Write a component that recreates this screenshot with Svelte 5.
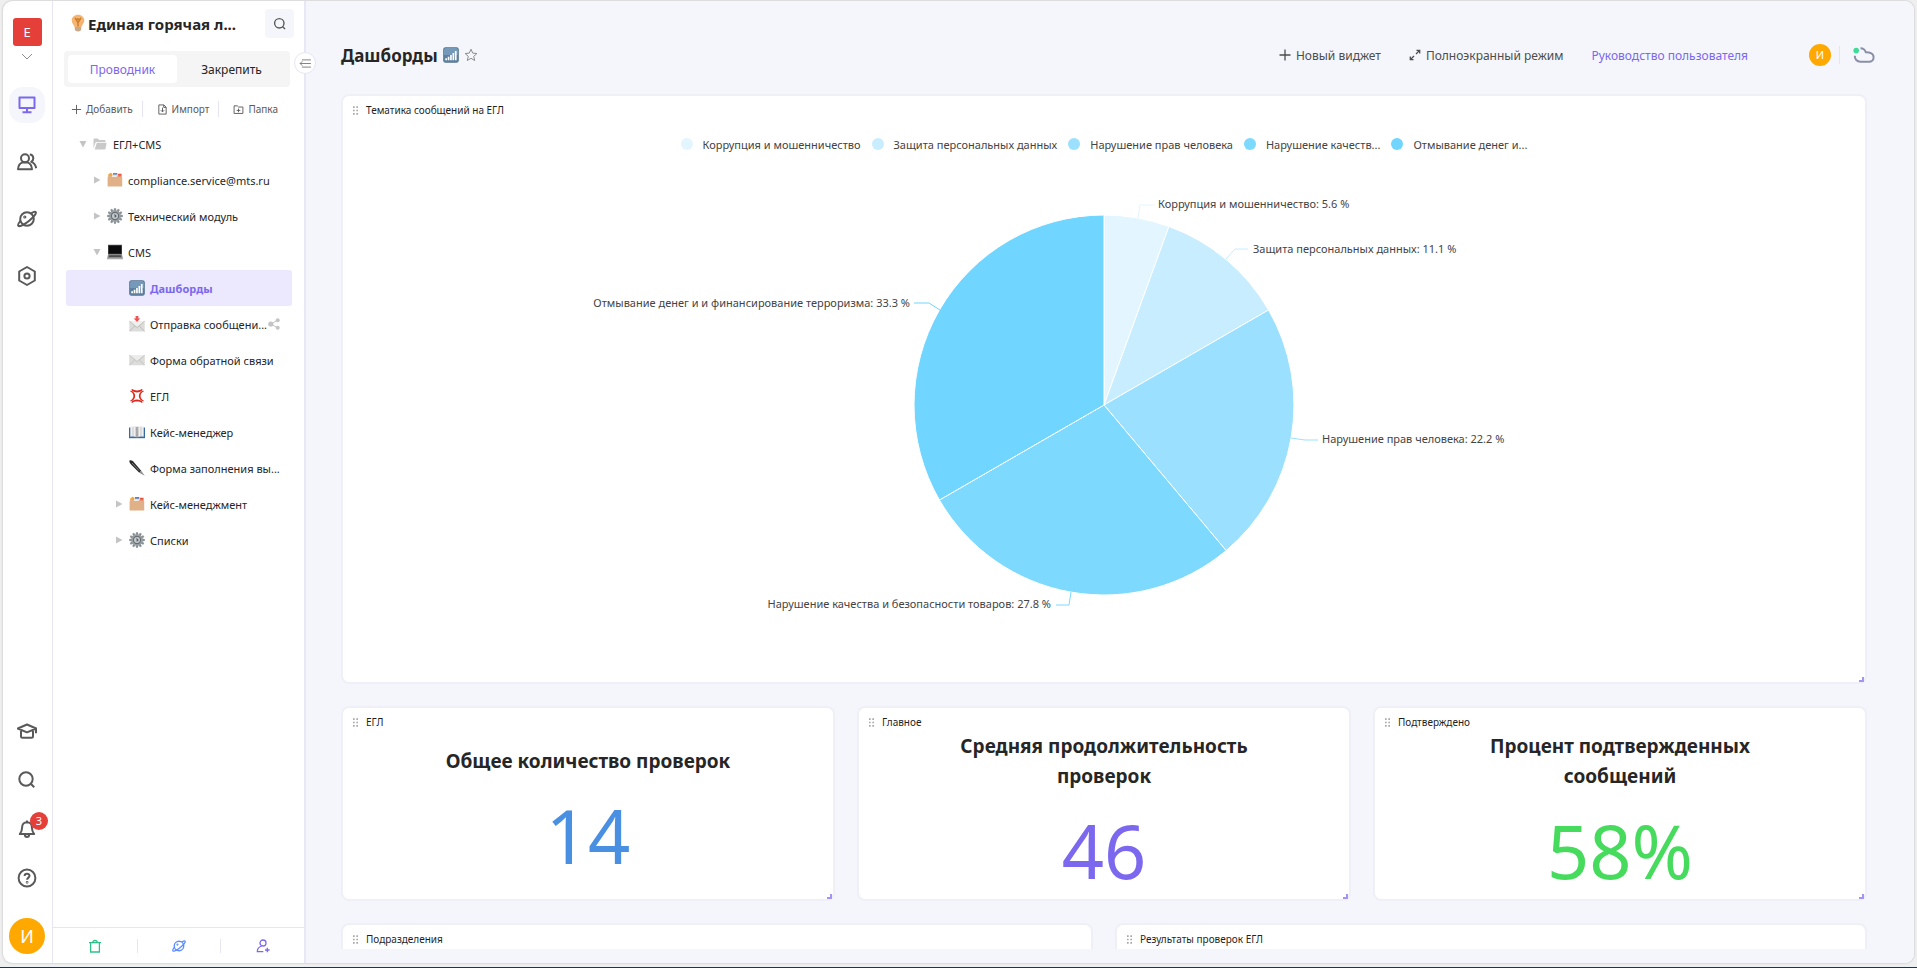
<script>
  const railTop = [
    { icon: 'monitor', label: 'Рабочий стол', active: true },
    { icon: 'people', label: 'Команда' },
    { icon: 'planet', label: 'Пространства' },
    { icon: 'hex', label: 'Настройки' }
  ];
  const railBottom = [
    { icon: 'cap', label: 'Обучение' },
    { icon: 'search', label: 'Поиск' },
    { icon: 'bell', label: 'Уведомления', badge: 3 },
    { icon: 'help', label: 'Помощь' }
  ];
  const tree = [
    { level: 0, caret: 'down', icon: 'folder', text: 'ЕГЛ+CMS' },
    { level: 1, caret: 'right', icon: 'dividers', text: 'compliance.service@mts.ru' },
    { level: 1, caret: 'right', icon: 'gear', text: 'Технический модуль' },
    { level: 1, caret: 'down', icon: 'laptop', text: 'CMS' },
    { level: 2, icon: 'bars', text: 'Дашборды', selected: true },
    { level: 2, icon: 'inbox', text: 'Отправка сообщени...', shared: true },
    { level: 2, icon: 'envelope', text: 'Форма обратной связи' },
    { level: 2, icon: 'anger', text: 'ЕГЛ' },
    { level: 2, icon: 'book', text: 'Кейс-менеджер' },
    { level: 2, icon: 'pen', text: 'Форма заполнения вы...' },
    { level: 2, caret: 'right', icon: 'dividers', text: 'Кейс-менеджмент' },
    { level: 2, caret: 'right', icon: 'gear', text: 'Списки' }
  ];
  const R = 190;
  const slices = [
    { name: 'Коррупция и мошенничество', legend: 'Коррупция и мошенничество', pct: '5.6 %', deg: 20, color: '#e3f6ff', line: '34,-187 36,-200 50,-200', x: 54, y: -197, anchor: 'start' },
    { name: 'Защита персональных данных', legend: 'Защита персональных данных', pct: '11.1 %', deg: 40, color: '#c8edff', line: '122,-146 131,-156 144,-156', x: 149, y: -152, anchor: 'start' },
    { name: 'Нарушение прав человека', legend: 'Нарушение прав человека', pct: '22.2 %', deg: 80, color: '#9be1ff', line: '187,33 201,35 214,35', x: 218, y: 38, anchor: 'start' },
    { name: 'Нарушение качества и безопасности товаров', legend: 'Нарушение качеств...', pct: '27.8 %', deg: 100, color: '#7ed9ff', line: '-33,187 -35,200 -48,200', x: -53, y: 203, anchor: 'end' },
    { name: 'Отмывание денег и и финансирование терроризма', legend: 'Отмывание денег и...', pct: '33.3 %', deg: 120, color: '#70d5ff', line: '-164,-95 -175,-102 -190,-102', x: -194, y: -98, anchor: 'end' }
  ];
  const pt = (deg) => {
    const a = ((deg - 90) * Math.PI) / 180;
    return `${(R * Math.cos(a)).toFixed(2)},${(R * Math.sin(a)).toFixed(2)}`;
  };
  let start = 0;
  const arcs = slices.map((s) => {
    const d = `M0,0 L${pt(start)} A${R},${R} 0 0 1 ${pt(start + s.deg)} Z`;
    start += s.deg;
    return { ...s, d };
  });
  const kpis = [
    { name: 'ЕГЛ', title: 'Общее количество проверок', value: '14', tone: 'blue' },
    { name: 'Главное', title: 'Средняя продолжительность проверок', value: '46', tone: 'violet' },
    { name: 'Подтверждено', title: 'Процент подтвержденных сообщений', value: '58%', tone: 'green' }
  ];
  const teeth = [0, 30, 60, 90, 120, 150, 180, 210, 240, 270, 300, 330];
</script>

{#snippet planetShape()}
  <circle cx="10" cy="10" r="6.800" />
  <path d="M3.600 11.500C1.600 14 .7 16 1.300 16.700c1.200 1.300 6.300-1.300 10.900-5s7.500-7.400 6.500-8.600c-.6-.7-2.400-.1-4.700 1.200" />
  <circle cx="7.800" cy="8" r=".6" />
{/snippet}

{#snippet icon(name)}
  {#if name === 'monitor'}
    <svg class="ico" viewBox="0 0 20 20"><path d="M2.500 2.500h15v10.500h-15zM10 13v4M5.500 17.300h9" /></svg>
  {:else if name === 'people'}
    <svg class="ico" viewBox="0 0 20 20"><circle cx="8" cy="6.300" r="4" /><path d="M1 17.300c.3-4 2.500-6.300 4.700-6.900h4.600c2.200.6 4.400 2.900 4.700 6.900zM12.800 2.500c4 .2 4.600 5.300 1.500 7.400 2.400.8 4.300 3.200 4.900 6.300" /></svg>
  {:else if name === 'planet'}
    <svg class="ico" viewBox="0 0 20 20">{@render planetShape()}</svg>
  {:else if name === 'hex'}
    <svg class="ico" viewBox="0 0 20 20"><path d="M10 1l7.800 4.500v9L10 19l-7.800-4.500v-9z" /><circle cx="10" cy="10" r="2.600" /></svg>
  {:else if name === 'cap'}
    <svg class="ico" viewBox="0 0 20 20"><path d="M.8 7.500L10 3.500l9.200 4L10 11.300zM4 9v6.200c0 .9.700 1.500 1.600 1.500h8.800c.9 0 1.600-.6 1.600-1.500V9M19 7.500v4.800" /></svg>
  {:else if name === 'search'}
    <svg class="ico" viewBox="0 0 20 20"><circle cx="9" cy="9" r="6.700" /><path d="M13.800 13.800l3.400 3.400" /></svg>
  {:else if name === 'bell'}
    <svg class="ico" viewBox="0 0 20 20"><path d="M10 1.500v1.700M10 3.200c-3.200 0-4.900 2.300-4.900 5.200 0 3.300-.7 4.600-2.300 6.700h14.400c-1.600-2.100-2.300-3.400-2.300-6.700 0-2.900-1.700-5.200-4.900-5.200zM7.800 15.400c.1 3.400 4.300 3.400 4.400 0" /></svg>
  {:else if name === 'help'}
    <svg class="ico" viewBox="0 0 20 20"><circle cx="10" cy="10" r="8.400" /><path d="M7.600 8c0-3.200 4.900-3 4.900-.2 0 1.800-2.400 1.900-2.400 4" /><circle cx="10.100" cy="14.300" r=".4" /></svg>
  {:else if name === 'folder'}
    <svg class="emo small" viewBox="0 0 14 14"><path fill="#c9c9c9" d="M.5 11.500V2.600c0-.6.400-1 1-1h3.300l1.300 1.500h5.400c.6 0 1 .4 1 1v.8H3.600c-.6 0-1 .3-1.200.8zM3.800 5.800h9c.5 0 .8.4.7.9l-1 5c-.1.500-.5.800-1 .8H1.700z" /></svg>
  {:else if name === 'dividers'}
    <svg class="emo" viewBox="0 0 16 16"><path fill="#f2a73c" d="M1.300 4V2.200L3.800.8 5.500 2v2z" /><path fill="#2f62b5" d="M6 1.200h4.300V4H6z" /><path fill="#d8e4f2" d="M5.600 2.600h5V4h-5z" /><path fill="#e8573f" d="M11 3.500V1.800h3.600v2z" /><path fill="#e0b087" d="M.6 5.200l.9-1.400h3l.8.900h4.200l1-1h3.600l1.100 1.200v9.700H.6z" /><path fill="#f0694c" d="M11.300 3h3v1.500h-3z" /></svg>
  {:else if name === 'gear'}
    <svg class="emo" viewBox="0 0 16 16">
      {#each teeth as t}<path fill="#8a9297" d="M7 .2h2l.4 3H6.600z" transform="rotate({t} 8 8)" />{/each}
      <circle cx="8" cy="8" r="5.700" fill="#9aa2a6" /><circle cx="8" cy="8" r="4.200" fill="#686e72" /><circle cx="8" cy="8" r="3" fill="#c4cbcf" /><path fill="#5a6064" d="M7.300 5.800l2.600 2.100-2.100 2.200-.2-1.500z" />
    </svg>
  {:else if name === 'laptop'}
    <svg class="emo" viewBox="0 0 16 16"><path fill="#585858" d="M1 .8h14v10H1z" /><path fill="#0b0b0d" d="M1.600 1.400h12.800v8.400H1.600z" /><path fill="#8d8d8d" d="M1 10.500h14l1 4.500H0z" /><path fill="#4c4c4c" d="M2.200 11.200h11.600l.4 1.700H1.800z" /><path fill="#bdbdbd" d="M0 14.400h16v1H0z" /></svg>
  {:else if name === 'bars'}
    <svg class="emo" viewBox="0 0 16 16"><rect x=".2" y=".2" width="15.600" height="15.600" rx="2.400" fill="#50718f" /><rect x="1" y="1" width="14" height="14" rx="1.800" fill="#7499b9" /><path fill="#5d809f" d="M1 8h14v5.500a1.500 1.500 0 0 1-1.500 1.500h-11A1.500 1.500 0 0 1 1 13.500z" /><path fill="#fff" d="M2.300 11.200h1.700v2H2.300zM4.700 9.800h1.700v3.400H4.700zM7.100 8h1.700v5.200H7.100zM9.500 6h1.700v7.200H9.500zM11.900 4h1.700v9.200h-1.700z" /></svg>
  {:else if name === 'inbox'}
    <svg class="emo" viewBox="0 0 16 16"><path fill="#dcdcda" d="M.3 5h15.400v10.500H.3z" /><path fill="#efefed" d="M.3 5h15.400L8 11.200z" /><path fill="none" stroke="#b5b5b3" stroke-width=".8" d="M.5 5.300L8 11.500l7.500-6.200M.5 15.200L5.700 10M15.500 15.200L10.300 10" /><path fill="#ee5555" d="M6.600 0h2.800v2.600h1.900L8 5.900 4.700 2.600h1.900z" /></svg>
  {:else if name === 'envelope'}
    <svg class="emo" viewBox="0 0 16 16"><path fill="#dcdcda" d="M.2 3h15.600v10.300H.2z" /><path fill="#ececea" d="M.2 3h15.600L8 9.200z" /><path fill="none" stroke="#bcbcba" stroke-width=".8" d="M.5 3.300L8 9.500l7.500-6.200M.5 13L5.700 8M15.500 13L10.300 8" /></svg>
  {:else if name === 'anger'}
    <svg class="emo" viewBox="0 0 16 16"><path fill="#dd2a1f" d="M3.200 1c2 1.900 7.600 1.900 9.600 0l.9.800C11.800 5.400 4.200 5.400 2.300 1.800zM3.200 15c2-1.900 7.600-1.900 9.600 0l.9-.8c-1.900-3.600-9.500-3.600-11.400 0zM1.200 3.600c4.300 1.100 4.300 7.700 0 8.800l.5 1c6-1.700 6-9.100 0-10.800zM14.800 3.600c-4.300 1.100-4.300 7.700 0 8.800l-.5 1c-6-1.700-6-9.100 0-10.800z" /></svg>
  {:else if name === 'book'}
    <svg class="emo" viewBox="0 0 16 16"><path fill="#376b9d" d="M0 3.500h16v10.700H0z" /><path fill="#f0f0f0" d="M1.300 2.500C4 1.800 6.500 2 8 3v10.200c-2-.9-4.300-1-6.700-.5zM14.700 2.500C12 1.800 9.500 2 8 3v10.200c2-.9 4.300-1 6.700-.5z" /><path fill="#aaa" d="M6.600 2.500L8 3l1.400-.5v10.300L8 13.300l-1.400-.5z" /><path fill="none" stroke="#bbb" stroke-width=".8" d="M4 3v9M12 3v9" /></svg>
  {:else if name === 'pen'}
    <svg class="emo" viewBox="0 0 16 16"><path fill="#2a2a2a" d="M.4.500c1.800-.5 3.200.2 4.500 1.800l7.300 8.500-1.900 1.900-7.500-7.500C1.100 3.700.2 2.300.4.500z" /><path fill="#8f8f8f" d="M12.200 10.800l3.500 4.900-5.400-3z" /><path stroke="#999" stroke-width=".8" d="M3 3l7 7.500" /></svg>
  {:else if name === 'bulb'}
    <svg class="bulb" viewBox="0 0 14 18"><path fill="#f3b571" d="M7 .8c3.700 0 6.300 2.500 6.300 5.700 0 2.800-2.200 4-2.700 6.500H3.400C2.900 10.500.7 9.300.7 6.500.7 3.300 3.300.8 7 .8z" /><path fill="none" stroke="#cf7a26" stroke-width="1.400" d="M7 12.500V8.500L4 3.800M7 8.500l3-4.700M4.600 6.200L7 4.800l2.400 1.400" /><path fill="#c9a98a" d="M3.800 13h6.400v2.600c0 1-1.300 1.900-3.200 1.900s-3.200-.9-3.200-1.900z" /></svg>
  {/if}
{/snippet}

{#snippet cardHead(name)}
  <header class="card-head">
    <svg class="grip" viewBox="0 0 6 10"><path d="M0 0h2v2H0zM4 0h2v2H4zM0 4h2v2H0zM4 4h2v2H4zM0 8h2v2H0zM4 8h2v2H4z" /></svg>
    <span>{name}</span>
  </header>
{/snippet}

<div class="desktop">
  <div class="window">
    <nav class="rail">
      <button class="space" aria-label="Сменить пространство"><span class="logo">Е</span>
        <svg class="chev" viewBox="0 0 12 7"><path d="M1 1l5 5 5-5" /></svg>
      </button>
      <div class="rail-top">
        {#each railTop as r}
          <button class="rail-btn" class:active={r.active} aria-label={r.label}>{@render icon(r.icon)}</button>
        {/each}
      </div>
      <div class="rail-bottom">
        {#each railBottom as r}
          <button class="rail-btn" aria-label={r.label}>{@render icon(r.icon)}{#if r.badge}<span class="badge">{r.badge}</span>{/if}</button>
        {/each}
      </div>
      <button class="me">И</button>
    </nav>

    <aside class="side">
      <div class="side-head">
        {@render icon('bulb')}
        <h2>Единая горячая л...</h2>
        <button class="find" aria-label="Найти">{@render icon('search')}</button>
      </div>
      <div class="tabs">
        <button class="tab on">Проводник</button>
        <button class="tab">Закрепить</button>
      </div>
      <div class="tools">
        <button><svg viewBox="0 0 12 12"><path d="M6 1v10M1 6h10" /></svg>Добавить</button>
        <button><svg viewBox="0 0 12 12"><path d="M2 1h5.500L10 3.500V11H2zM6 4v4.500M4.200 6.800L6 8.600l1.800-1.800M7.300 1v2.700H10" /></svg>Импорт</button>
        <button><svg viewBox="0 0 12 12"><path d="M1.200 2h3.500L6 3.300h4.800v7H1.200zM6 5v4M4 7h4" /></svg>Папка</button>
      </div>
      <ul class="tree">
        {#each tree as n}
          <li>
            <button class="node l{n.level}" class:selected={n.selected}>
              <span class="caret">{#if n.caret}<svg class={n.caret} viewBox="0 0 8 8"><path d="M1 .5L7.500 4 1 7.500z" /></svg>{/if}</span>
              {@render icon(n.icon)}
              <span class="label">{n.text}</span>
              {#if n.shared}<svg class="share" viewBox="0 0 12 12"><path d="M3 6l6.500-3.800M3 6l6.500 3.800" stroke="#c4c4c4" /><circle cx="2.800" cy="6" r="2.600" /><circle cx="9.700" cy="2.300" r="2" /><circle cx="9.700" cy="9.700" r="2" /></svg>{/if}
            </button>
          </li>
        {/each}
      </ul>
      <div class="side-foot">
        <button class="trash" aria-label="Корзина"><svg viewBox="0 0 14 14"><path d="M1 3.700h12M2.600 3.700V13h8.800V3.700M4.800 3.500C5 .8 9 .8 9.200 3.500" /></svg></button>
        <button class="orbit" aria-label="Пространство"><svg viewBox="0 0 20 20">{@render planetShape()}</svg></button>
        <button class="invite" aria-label="Пригласить"><svg viewBox="0 0 14 14"><circle cx="7" cy="4" r="3" /><path d="M5.800 7C3 7.800 1.300 10 1.300 12.700h6M11.300 8.700v4.600M9 11h4.600" /></svg></button>
      </div>
      <button class="collapse" aria-label="Свернуть панель"><svg viewBox="0 0 14 10"><path d="M3 1h10M1 5h12M3 9h10M3.500 2.500L1 5l2.500 2.500" /></svg></button>
    </aside>

    <main class="main">
      <div class="topbar">
        <h1>Дашборды</h1>
        {@render icon('bars')}
        <button class="star" aria-label="В избранное"><svg viewBox="0 0 14 14"><path d="M7 1.200l1.700 3.900 4.200.4-3.200 2.800 1 4.200L7 10.300l-3.700 2.200 1-4.200L1.100 5.500l4.200-.4z" /></svg></button>
        <div class="actions">
          <button class="act"><svg viewBox="0 0 12 12"><path d="M6 .5v11M.5 6h11" /></svg>Новый виджет</button>
          <button class="act"><svg viewBox="0 0 12 12"><path d="M7.500 1.300h3.200v3.200M10.500 1.500L7 5M4.500 10.700H1.300V7.500M1.500 10.500L5 7" /></svg>Полноэкранный режим</button>
          <a href="#guide">Руководство пользователя</a>
        </div>
        <div class="status">
          <span class="user">И</span>
          <i class="sep"></i>
          <svg class="cloud" viewBox="0 0 22 16"><path d="M7.500 1.200c2.500 0 4.400 1.300 5.300 4C16 5 20.600 6.300 20.600 10.200c0 2.800-2 4.600-4.600 4.600H7.500C3.800 14.800 1.600 12 1.800 8.800" /><circle cx="3.200" cy="3.600" r="2.800" /></svg>
        </div>
      </div>

      <div class="board">
        <section class="card wide">
          {@render cardHead('Тематика сообщений на ЕГЛ')}
          <ul class="legend">
            {#each slices as s}<li><i style="background: {s.color}"></i>{s.legend}</li>{/each}
          </ul>
          <svg class="pie" viewBox="-761 -241 1522 480" role="img" aria-label="Тематика сообщений на ЕГЛ">
            {#each arcs as a}
              <path d={a.d} fill={a.color} stroke="#fff" />
            {/each}
            {#each arcs as a}
              <polyline points={a.line} fill="none" stroke={a.color} />
              <text x={a.x} y={a.y} text-anchor={a.anchor}>{a.name}: {a.pct}</text>
            {/each}
          </svg>
          <span class="resize"></span>
        </section>
        {#each kpis as k}
          <section class="card kpi">
            {@render cardHead(k.name)}
            <div class="kpi-body">
              <h3>{k.title}</h3>
              <strong class={k.tone}>{k.value}</strong>
            </div>
            <span class="resize"></span>
          </section>
        {/each}
        <section class="card half">{@render cardHead('Подразделения')}</section>
        <section class="card half">{@render cardHead('Результаты проверок ЕГЛ')}</section>
      </div>
    </main>
  </div>
</div>

<style>
  :global(body) { margin: 0; }
  * { box-sizing: border-box; }
  button { border: 0; background: none; padding: 0; margin: 0; font: inherit; color: inherit; cursor: pointer; }
  ul { list-style: none; margin: 0; padding: 0; }
  h1, h2, h3 { margin: 0; font-weight: 700; }
  svg { fill: none; flex: none; display: block; }
  .desktop { height: 100vh; padding: 1px 3px 4px; background: #efefef; border-bottom: 1px solid #0c3a63; font-family: "Noto Sans", "Open Sans", sans-serif; font-size: 12px; color: #262626; overflow: hidden; }
  .window { height: 100%; display: flex; background: #fff; border-radius: 9px; overflow: hidden; box-shadow: 0 0 2px #aaa; }

  .rail { width: 50px; flex: none; border-right: 1px solid #e6e5f5; display: flex; flex-direction: column; align-items: center; padding: 17px 1px 9px 0; }
  .space { display: flex; flex-direction: column; align-items: center; gap: 7px; }
  .logo { width: 29px; height: 28px; border-radius: 3px; background: #e53f3a; color: #fff; font-size: 13px; line-height: 29px; text-align: center; }
  .chev { width: 12px; height: 7px; stroke: #8c8c8c; }
  .rail-top { display: flex; flex-direction: column; gap: 21px; margin-top: 27px; }
  .rail-bottom { display: flex; flex-direction: column; gap: 13px; margin-top: auto; }
  .rail-btn { position: relative; width: 36px; height: 36px; border-radius: 14px; display: flex; align-items: center; justify-content: center; }
  .rail-btn.active { background: #f5f6fb; }
  .ico { width: 20px; height: 20px; stroke: #595959; stroke-width: 2; stroke-linejoin: round; }
  .active .ico { stroke: #7b68ee; }
  .badge { position: absolute; right: -3px; top: 1px; width: 18px; height: 18px; border-radius: 9px; background: #e53f3a; color: #fff; font-size: 11px; line-height: 18px; text-align: center; }
  .me { width: 36px; height: 36px; border-radius: 18px; background: #ffa800; color: #fff; font-size: 18px; margin-top: 22px; }

  .side { position: relative; width: 253px; flex: none; border-right: 2px solid #e8e8f5; display: flex; flex-direction: column; }
  .side-head { display: flex; align-items: center; height: 29px; margin: 8px 10px 13px 18px; }
  .bulb { width: 14px; height: 18px; margin: 0 3px 2px 0; }
  h2 { font-size: 15px; white-space: nowrap; flex: 1; }
  .find { width: 29px; height: 29px; background: #f5f6fb; border-radius: 4px; display: flex; align-items: center; justify-content: center; }
  .find .ico { width: 14px; height: 14px; }
  .tabs { display: flex; height: 36px; margin: 0 14px 0 11px; padding: 4px; background: #f5f5f5; border-radius: 4px; }
  .tab { flex: 1; border-radius: 4px; font-size: 12px; }
  .tab.on { background: #fff; color: #7b68ee; }
  .tools { display: flex; justify-content: space-between; height: 16px; margin: 14px 26px 9px 18px; color: #595959; font-size: 10px; }
  .tools button { display: flex; align-items: center; gap: 4px; }
  .tools button + button { border-left: 1px solid #e6e5f5; padding-left: 14px; }
  .tools svg { width: 11px; height: 11px; stroke: #595959; }
  .tree { padding: 0 12px 0 13px; flex: 1; }
  .node { width: 100%; height: 36px; display: flex; align-items: center; border-radius: 3px; text-align: left; white-space: nowrap; font-size: 11px; }
  .l0 { padding-left: 13px; }
  .l1 { padding-left: 27px; }
  .l2 { padding-left: 49px; }
  .selected { background: #ece9ff; color: #7b68ee; font-weight: 700; }
  .caret { width: 14px; flex: none; }
  .caret svg { width: 8px; height: 8px; fill: #c4c4c4; }
  .caret .down { transform: rotate(90deg); }
  .emo { width: 16px; height: 16px; margin-right: 5px; }
  .small { width: 14px; height: 14px; margin-right: 6px; }
  .share { width: 12px; height: 12px; fill: #c4c4c4; margin-left: 1px; }
  .side-foot { display: grid; grid-template-columns: repeat(3, 1fr); border-top: 1px solid #e6e5f5; height: 36px; align-items: center; }
  .side-foot button { display: flex; justify-content: center; height: 14px; }
  .side-foot button + button { border-left: 1px solid #e6e5f5; }
  .side-foot svg { width: 14px; height: 14px; stroke-width: 1.300; }
  .trash { stroke: #2fc08a; }
  .orbit { stroke: #5b8cff; }
  .side-foot .orbit svg { stroke-width: 1.900; }
  .invite { stroke: #7b68ee; }
  .collapse { position: absolute; right: -12px; top: 51px; width: 22px; height: 22px; border-radius: 11px; background: #fff; border: 1px solid #e6e5f5; display: flex; align-items: center; justify-content: center; z-index: 2; }
  .collapse svg { width: 13px; height: 9px; stroke: #777; }

  .main { flex: 1; min-width: 0; background: #f5f6fb; display: flex; flex-direction: column; padding: 0 47px 14px 35px; }
  .topbar { display: flex; align-items: center; height: 62px; margin: 23px -8px 8px 0; }
  h1 { font-size: 17px; margin-right: 5px; }
  .star svg { width: 14px; height: 14px; stroke: #8c8c8c; }
  .actions { display: flex; align-items: center; gap: 28px; margin-left: auto; font-size: 12px; color: #4d4d4d; }
  .act { display: flex; align-items: center; gap: 5px; }
  .act svg { width: 12px; height: 12px; stroke: #4d4d4d; stroke-width: 1.300; }
  .actions a { color: #7b68ee; text-decoration: none; }
  .status { display: flex; align-items: center; margin-left: 61px; }
  .user { width: 22px; height: 22px; border-radius: 11px; background: #ffa800; color: #fff; font-size: 11px; line-height: 22px; text-align: center; }
  .sep { width: 1px; height: 18px; background: #e6e5f0; margin: 0 13px 0 8px; }
  .cloud { width: 22px; height: 16px; stroke: #8a8fa8; stroke-width: 2; }
  .cloud circle { fill: #3ddc97; stroke: none; }

  .board { flex: 1; min-height: 0; overflow: hidden; display: grid; grid-template-columns: repeat(6, 1fr); grid-auto-rows: max-content; gap: 22px; }
  .card { position: relative; background: #fff; border: 2px solid #efeff8; border-radius: 8px; grid-column: span 2; }
  .wide { grid-column: 1 / -1; padding-bottom: 38px; }
  .half { grid-column: span 3; height: 195px; }
  .kpi { height: 195px; display: flex; flex-direction: column; }
  .card-head { display: flex; align-items: center; gap: 8px; height: 28px; padding-left: 10px; font-size: 10px; color: #1f1f1f; }
  .grip { width: 5px; height: 9px; fill: #a8a8a8; }
  .legend { display: flex; justify-content: center; gap: 11px; height: 40px; align-items: center; font-size: 11px; color: #444; }
  .legend li { display: flex; align-items: center; gap: 10px; }
  .legend i { width: 12px; height: 12px; border-radius: 6px; }
  .pie { width: 100%; height: 480px; }
  .pie text { font-size: 11px; fill: #444; }
  .resize { position: absolute; right: 1px; bottom: 0; width: 5px; height: 5px; border-right: 2px solid #a594f3; border-bottom: 2px solid #a594f3; }
  .kpi-body { flex: 1; min-height: 0; display: flex; flex-direction: column; align-items: center; justify-content: center; gap: 20px; padding: 0 80px 14px; text-align: center; }
  h3 { font-size: 19px; line-height: 30px; }
  strong { font-weight: 400; font-size: 74px; line-height: 80px; }
  .blue { color: #4a90e2; }
  .violet { color: #7b68ee; }
  .green { color: #47db5d; }
</style>
